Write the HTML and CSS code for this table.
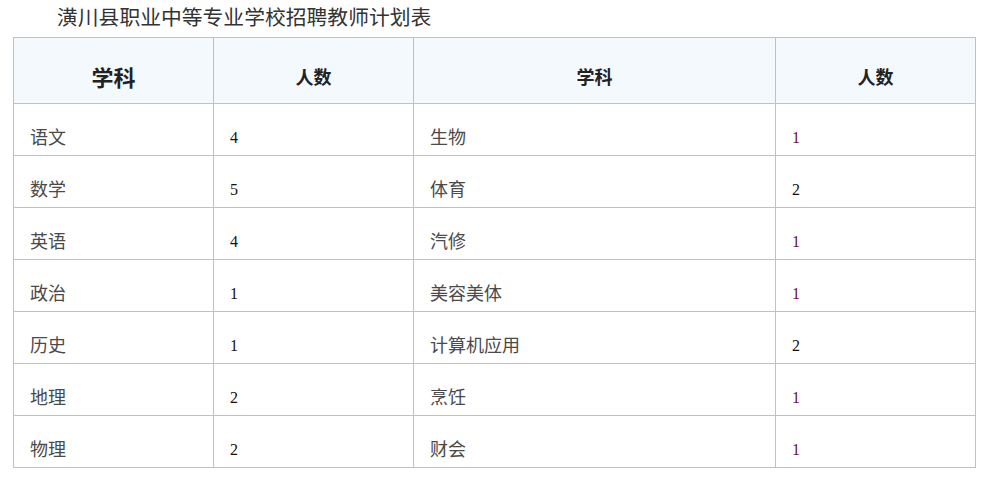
FILE: index.html
```html
<!DOCTYPE html>
<html lang="zh">
<head>
<meta charset="utf-8">
<link rel="stylesheet" href="styles.css">
</head>
<body>
<p class="title">潢川县职业中等专业学校招聘教师计划表</p>
<table class="plan">
  <colgroup>
    <col class="c1"><col class="c2"><col class="c3"><col class="c4">
  </colgroup>
  <thead>
    <tr>
      <th class="big">学科</th>
      <th>人数</th>
      <th>学科</th>
      <th>人数</th>
    </tr>
  </thead>
  <tbody>
    <tr><td>语文</td><td class="n">4</td><td>生物</td><td class="m">1</td></tr>
    <tr><td>数学</td><td class="n">5</td><td>体育</td><td class="n">2</td></tr>
    <tr><td>英语</td><td class="n">4</td><td>汽修</td><td class="m">1</td></tr>
    <tr><td>政治</td><td class="n">1</td><td>美容美体</td><td class="m">1</td></tr>
    <tr><td>历史</td><td class="n">1</td><td>计算机应用</td><td class="n">2</td></tr>
    <tr><td>地理</td><td class="n">2</td><td>烹饪</td><td class="m">1</td></tr>
    <tr><td>物理</td><td class="n">2</td><td>财会</td><td class="m">1</td></tr>
  </tbody>
</table>
</body>
</html>
```

FILE: styles.css
```css
html, body {
  margin: 0;
  padding: 0;
  background: #fff;
}
body {
  font-family: "Liberation Serif", "Noto Sans CJK SC", serif;
  color: #333;
}
.title {
  margin: 0;
  padding: 6px 0 0 57px;
  height: 37px;
  box-sizing: border-box;
  font-size: 20.8px;
  line-height: 24px;
  color: #333;
}
.plan {
  margin-left: 13px;
  border-collapse: collapse;
  width: 963px;
  table-layout: fixed;
}
.c1, .c2, .c4 { width: 200px; }
.c3 { width: 362px; }
.plan th, .plan td {
  border: 1px solid #b4c4d4;
  padding: 0;
}
.plan th {
  height: 66px;
  box-sizing: border-box;
  padding-top: 10px;
  background: #f3f9fd;
  font-size: 18px;
  font-weight: bold;
  color: #222;
  text-align: center;
  vertical-align: middle;
}
.plan th.big { font-size: 22px; }
.plan td {
  height: 52px;
  box-sizing: border-box;
  padding: 16px 16px 0 16px;
  font-size: 18px;
  line-height: 20px;
  color: #4a4a4a;
  vertical-align: middle;
}
.plan td.n { color: #111; font-size: 16px; }
.plan td.m { color: #6b0a3a; font-size: 16px; }
```
